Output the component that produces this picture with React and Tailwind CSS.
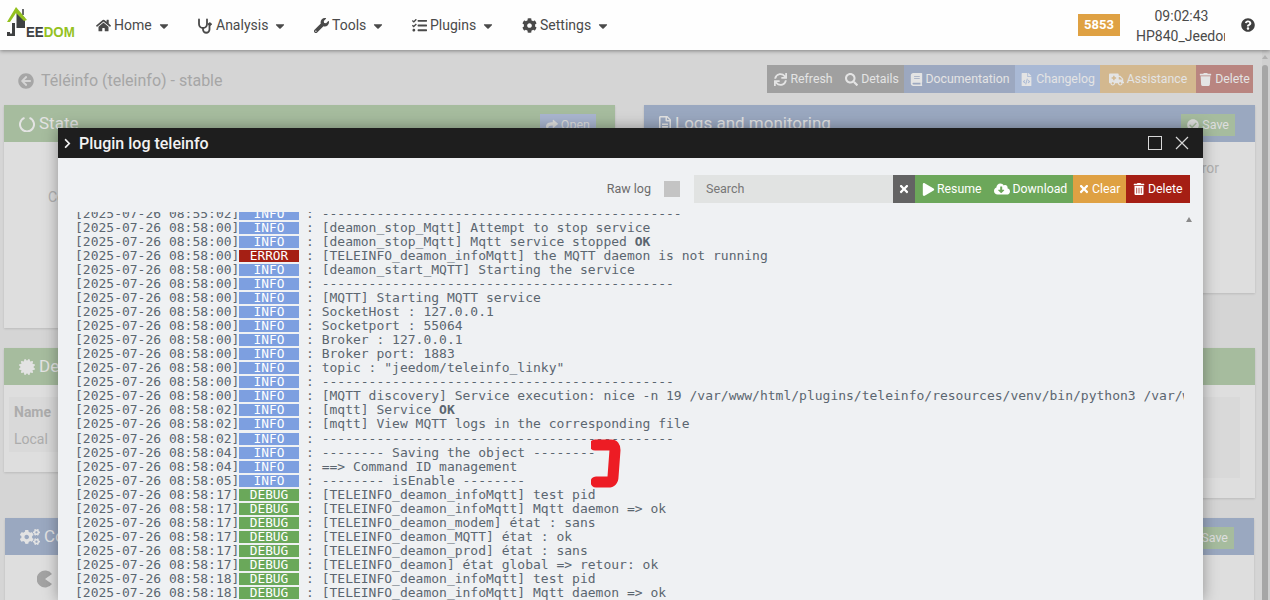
import React from 'react'
import {
  FaHome, FaWrench, FaTasks, FaCog, FaCogs, FaCaretDown, FaQuestionCircle, FaArrowCircleLeft,
  FaSync, FaSearch, FaBook, FaFileCode, FaAmbulance, FaTrash, FaTrashAlt, FaPlay, FaCloudDownloadAlt, FaTimes,
  FaRegFileAlt, FaCertificate, FaCheckCircle, FaShare, FaChevronRight,
} from 'react-icons/fa'

const dashes = (n) => '-'.repeat(n)

const LOG = [
  ['08:55:02', 'INFO', dashes(46)],
  ['08:58:00', 'INFO', '[deamon_stop_Mqtt] Attempt to stop service'],
  ['08:58:00', 'INFO', '[deamon_stop_Mqtt] Mqtt service stopped ', 'OK'],
  ['08:58:00', 'ERROR', '[TELEINFO_deamon_infoMqtt] the MQTT daemon is not running'],
  ['08:58:00', 'INFO', '[deamon_start_MQTT] Starting the service'],
  ['08:58:00', 'INFO', dashes(45)],
  ['08:58:00', 'INFO', '[MQTT] Starting MQTT service'],
  ['08:58:00', 'INFO', 'SocketHost : 127.0.0.1'],
  ['08:58:00', 'INFO', 'Socketport : 55064'],
  ['08:58:00', 'INFO', 'Broker : 127.0.0.1'],
  ['08:58:00', 'INFO', 'Broker port: 1883'],
  ['08:58:00', 'INFO', 'topic : "jeedom/teleinfo_linky"'],
  ['08:58:00', 'INFO', dashes(45)],
  ['08:58:00', 'INFO', '[MQTT discovery] Service execution: nice -n 19 /var/www/html/plugins/teleinfo/resources/venv/bin/python3 /var/www/html/plugins/teleinfo/resources/'],
  ['08:58:02', 'INFO', '[mqtt] Service ', 'OK'],
  ['08:58:02', 'INFO', '[mqtt] View MQTT logs in the corresponding file'],
  ['08:58:02', 'INFO', dashes(45)],
  ['08:58:04', 'INFO', '-------- Saving the object --------'],
  ['08:58:04', 'INFO', '==> Command ID management'],
  ['08:58:05', 'INFO', '-------- isEnable --------'],
  ['08:58:17', 'DEBUG', '[TELEINFO_deamon_infoMqtt] test pid'],
  ['08:58:17', 'DEBUG', '[TELEINFO_deamon_infoMqtt] Mqtt daemon => ok'],
  ['08:58:17', 'DEBUG', '[TELEINFO_deamon_modem] état : sans'],
  ['08:58:17', 'DEBUG', '[TELEINFO_deamon_MQTT] état : ok'],
  ['08:58:17', 'DEBUG', '[TELEINFO_deamon_prod] état : sans'],
  ['08:58:17', 'DEBUG', '[TELEINFO_deamon] état global => retour: ok'],
  ['08:58:18', 'DEBUG', '[TELEINFO_deamon_infoMqtt] test pid'],
  ['08:58:18', 'DEBUG', '[TELEINFO_deamon_infoMqtt] Mqtt daemon => ok'],
]

const levelColors = { INFO: 'bg-[#7d9fe0]', ERROR: 'bg-[#a51f14]', DEBUG: 'bg-[#6aa85a]' }

function Logo() {
  return (
    <div className="relative w-[80px] h-[50px] shrink-0">
      <svg className="absolute left-[5px] top-[5px]" width="24" height="33" viewBox="0 0 24 33">
        <path d="M11.5 8 L12 6 L20 13 V23 H11.5 Z" fill="#3f4142" />
        <rect x="17" y="4" width="2" height="6" fill="#6a6c6d" />
        <path d="M2 17 L11 2 L22 15 L19 16 L11 8 L5 17 Z" fill="#94c11f" />
        <path d="M7 18 H10 V31 H2 V27 H5 V28.5 H7 Z" fill="#3f4142" />
      </svg>
      <span className="absolute left-[26px] top-[25px] text-[14px] leading-[14px] font-bold font-['Liberation_Sans',sans-serif] whitespace-nowrap scale-x-95 origin-left">
        <span className="text-[#3f4142]">EE</span>
        <span className="text-[#94c11f]">DOM</span>
      </span>
    </div>
  )
}

function Stethoscope({ className }) {
  return (
    <svg className={className} width="16" height="16" viewBox="0 0 16 16" fill="none" stroke="currentColor" strokeWidth="1.8" strokeLinecap="round">
      <path d="M2 1.5 V6 A4 4 0 0 0 10 6 V1.5" />
      <path d="M6 10 V11.5 A3 3 0 0 0 12.5 11.5 V8" />
      <circle cx="12.8" cy="6.2" r="1.4" fill="currentColor" strokeWidth="1" />
    </svg>
  )
}

function ThinRing({ className }) {
  return (
    <svg className={className} width="16" height="16" viewBox="0 0 16 16" fill="none" stroke="currentColor" strokeWidth="2">
      <path d="M5.5 1.9 A7 7 0 1 0 10.5 1.9" />
    </svg>
  )
}

function NavItem({ icon: Icon, label, className }) {
  return (
    <div className={`flex items-center text-[14px] text-[#4a4a4a] shrink-0 ${className}`}>
      <Icon className="text-[15px] mr-[3px] shrink-0" />
      <span>{label}</span>
      <FaCaretDown className="text-[14px] ml-[5px]" />
    </div>
  )
}

function PageButton({ icon: Icon, label, className, iconClass = 'text-[13px]' }) {
  return (
    <div className={`flex items-center justify-center h-full gap-[3px] text-[12.3px] text-[#e4e4e4] ${className}`}>
      <Icon className={iconClass} />
      <span className="mt-[1px]">{label}</span>
    </div>
  )
}

function Panel({ title, icon: Icon, iconClass = 'text-[16px]', headerClass, heightClass, widthClass, button, buttonClass, buttonIcon: ButtonIcon, children }) {
  return (
    <section className={`bg-[#dedede] shadow-[0_1px_2px_rgba(0,0,0,0.12)] ${heightClass} ${widthClass}`}>
      <div className={`flex items-center justify-between h-[37px] pl-[15px] pr-[20px] ${headerClass}`}>
        <div className="flex items-center gap-[4px] mt-[1px] text-[17px] text-[#e3e3e3]">
          <Icon className={iconClass} />
          <span>{title}</span>
        </div>
        {button && (
          <div className={`flex items-center gap-[3px] h-[22px] mt-[3px] px-[6px] text-[12.5px] text-[#dedede] ${buttonClass}`}>
            <ButtonIcon className="text-[12px]" />
            {button}
          </div>
        )}
      </div>
      {children}
    </section>
  )
}

function Background() {
  return (
    <div className="flex-1 min-w-0 pl-[4px] pr-[7px]">
      <div className="flex items-start justify-between h-[55px] pl-[14px] pt-[15px]">
        <div className="flex items-center gap-[7px] h-[28px] mt-[2px] text-[16px] text-[#a6a6a6]">
          <FaArrowCircleLeft className="text-[16px]" />
          <span>Téléinfo (teleinfo) - stable</span>
        </div>
        <div className="flex h-[28px] mr-[2px]">
          <PageButton icon={FaSync} label="Refresh" className="w-[73px] bg-[#a0a0a0]" />
          <PageButton icon={FaSearch} label="Details" className="w-[64px] bg-[#a0a0a0]" />
          <PageButton icon={FaBook} label="Documentation" className="w-[111px] bg-[#9ca8c0]" />
          <PageButton icon={FaFileCode} label="Changelog" className="w-[85px] bg-[#a9b9d5]" />
          <PageButton icon={FaAmbulance} label="Assistance" iconClass="text-[15px]" className="w-[96px] bg-[#d3b88f]" />
          <PageButton icon={FaTrash} label="Delete" className="w-[57px] bg-[#b98580]" />
        </div>
      </div>

      <div className="flex justify-between items-start">
        <Panel title="State" icon={ThinRing} headerClass="bg-[#a6bc9e]" heightClass="h-[223px]" widthClass="w-[611px]"
          button="Open" buttonIcon={FaShare} buttonClass="bg-[#a9b5cf] mr-[-1px]">
          <p className="pl-[44px] pt-[45px] text-[14px] text-[#b0b0b0]">Configuration</p>
        </Panel>
        <Panel title="Logs and monitoring" icon={FaRegFileAlt} iconClass="w-[12px] h-[16px]" headerClass="bg-[#9aa8c0]" heightClass="h-[188px]" widthClass="w-[611px]"
          button="Save" buttonIcon={FaCheckCircle} buttonClass="bg-[#a6bc9e]">
          <p className="pr-[36px] pt-[16px] text-right text-[14px] text-[#b0b0b0]">error</p>
        </Panel>
      </div>

      <div className="flex justify-between items-start mt-[20px]">
        <Panel title="Dependencies" icon={FaCertificate} headerClass="bg-[#a6bc9e]" heightClass="h-[124px]" widthClass="w-[611px]">
          <div className="mx-[5px] mt-[12px] h-[55px] bg-[#d9d9d9] pl-[5px] pt-[5px] text-[14px] text-[#acacac]">
            <p className="font-bold">Name</p>
            <p className="mt-[6px]">Local</p>
          </div>
        </Panel>
        <Panel title="Daemon" icon={FaCertificate} headerClass="bg-[#a6bc9e]" heightClass="h-[150px]" widthClass="w-[611px]">
          <div className="mx-[15px] mt-[12px] h-[81px] bg-[#d9d9d9]" />
        </Panel>
      </div>

      <div className="mt-[20px] ml-[1px] mr-[1px]">
        <Panel title="Configuration" icon={FaCogs} iconClass="text-[20px]" headerClass="bg-[#9aa8c0]" heightClass="h-[90px]" widthClass="w-full"
          button="Save" buttonIcon={FaCheckCircle} buttonClass="bg-[#a6bc9e]">
          <div className="pl-[32px] pt-[15px]">
            <svg width="16" height="18" viewBox="0 0 16 18">
              <path d="M15 4 A8.5 8.5 0 1 0 15 14 L8 9 Z" fill="#a3a3a3" />
            </svg>
          </div>
        </Panel>
      </div>
    </div>
  )
}

function LogRow({ time, level, text, strong }) {
  return (
    <div className="flex items-center h-[14.04px] whitespace-pre text-[13px] leading-[14px] text-[#5b6670]">
      <span className="w-[164px] shrink-0">{`[2025-07-26 ${time}]`}</span>
      <span className={`w-[60px] h-[12px] shrink-0 flex items-center justify-center text-[12.8px] text-white ${levelColors[level]}`}>{level}</span>
      <span className="ml-[7px]">
        {': '}
        {text}
        {strong && <b>{strong}</b>}
      </span>
    </div>
  )
}

function ToolButton({ icon: Icon, label, iconClass, className }) {
  return (
    <div className={`flex items-center h-full text-[12.3px] text-white ${className}`}>
      <Icon className={iconClass} />
      <span className="mt-[1px]">{label}</span>
    </div>
  )
}

function LogModal() {
  return (
    <div className="absolute left-[58px] top-[128px] w-[1145px] h-[472px] flex flex-col bg-[#eff1f3] shadow-[0_0_14px_rgba(0,0,0,0.35)] overflow-hidden">
      <div className="flex items-center justify-between h-[30px] shrink-0 bg-[#1e1e1e] text-[#f2f2f2] pl-[4px] pr-[14px]">
        <div className="flex items-center gap-[6px] mt-[1px] text-[16px] font-medium">
          <FaChevronRight className="text-[11px]" />
          <span>Plugin log teleinfo</span>
        </div>
        <div className="flex items-center gap-[13px]">
          <div className="w-[14px] h-[14px] border-[1.5px] border-[#d8d8d8]" />
          <svg width="14" height="14" viewBox="0 0 14 14" stroke="#d8d8d8" strokeWidth="1.2">
            <path d="M1 1 L13 13 M13 1 L1 13" />
          </svg>
        </div>
      </div>

      <div className="flex items-center justify-end h-[28px] mt-[17px] pr-[13px] shrink-0">
        <span className="mt-[1px] mr-[13px] text-[12.5px] text-[#6b6b6b]">Raw log</span>
        <div className="w-[16px] h-[16px] bg-[#c4c4c4] mr-[14px]" />
        <div className="flex items-center w-[199px] h-full bg-[#e1e3e2] pl-[12px] pt-[1px] text-[12.5px] text-[#777]">Search</div>
        <div className="flex items-center justify-center w-[22px] h-full bg-[#636363] text-white">
          <FaTimes className="text-[12px]" />
        </div>
        <div className="flex items-center w-[158px] h-full bg-[#6ca75a]">
          <ToolButton icon={FaPlay} label="Resume" iconClass="text-[13px] mr-[2px]" className="pl-[7px] pr-[6px]" />
          <ToolButton icon={FaCloudDownloadAlt} label="Download" iconClass="text-[16px] mr-[3px]" className="pl-[6px]" />
        </div>
        <ToolButton icon={FaTimes} label="Clear" iconClass="text-[12px] mr-[2px]" className="w-[53px] bg-[#dfa143] pl-[5px]" />
        <ToolButton icon={FaTrashAlt} label="Delete" iconClass="text-[12px] mr-[3px]" className="w-[64px] bg-[#a51f14] pl-[7px]" />
      </div>

      <div className="relative flex-1 min-h-0 mt-[9px] ml-[17px] mr-[19px] overflow-hidden font-['DejaVu_Sans_Mono',monospace]">
        <div className="mt-[-5px]">
          {LOG.map(([time, level, text, strong], i) => (
            <LogRow key={i} time={time} level={level} text={text} strong={strong} />
          ))}
        </div>
      </div>

      <div className="absolute left-[1128px] top-[89px] w-0 h-0 border-x-[3.5px] border-x-transparent border-b-[5px] border-b-[#8a8a8a]" />

      <svg className="absolute left-[533px] top-[310px]" width="32" height="56" viewBox="0 0 32 56" fill="none">
        <path d="M4 7 H20 Q24 7 24 12 L22 39 Q22 44 17 44 H5" stroke="#ed1c24" strokeWidth="11" strokeLinecap="round" strokeLinejoin="round" />
      </svg>
    </div>
  )
}

export default function App() {
  return (
    <div className="relative h-[600px] overflow-hidden bg-[#d5d5d5] font-['Roboto',sans-serif]">
      <header className="relative z-10 flex items-center h-[50px] bg-[#fefefe] shadow-[0_1px_4px_rgba(0,0,0,0.4)]">
        <Logo />
        <div className="flex items-center ml-[16px] pt-[1px]">
          <NavItem icon={FaHome} label="Home" className="w-[101px]" />
          <NavItem icon={Stethoscope} label="Analysis" className="w-[117px]" />
          <NavItem icon={FaWrench} label="Tools" className="w-[98px]" />
          <NavItem icon={FaTasks} label="Plugins" className="w-[110px]" />
          <NavItem icon={FaCog} label="Settings" className="w-[100px]" />
        </div>
        <div className="ml-auto flex items-center">
          <div className="flex items-center justify-center w-[42px] h-[22px] bg-[#dfa143] text-white text-[13px] font-bold">5853</div>
          <div className="w-[89px] ml-[16px] pt-[1px] text-[14px] leading-[20px] text-[#4a4a4a] text-center overflow-hidden whitespace-nowrap">
            <div className="pl-[2px]">09:02:43</div>
            <div className="text-left">HP840_Jeedom</div>
          </div>
          <FaQuestionCircle className="ml-[16px] mr-[15px] text-[14px] text-[#3f3f3f]" />
        </div>
      </header>

      <div className="flex">
        <Background />
        <div className="relative w-[8px] h-[550px] shrink-0 bg-[#cfcfcf]">
          <div className="absolute left-0 top-[15px] w-[6px] h-[535px] rounded-t-[3px] bg-[#a6a6a6]" />
          <div className="absolute left-[0px] top-[5px] w-0 h-0 border-x-[3px] border-x-transparent border-b-[4px] border-b-[#b0b0b0]" />
        </div>
      </div>

      <LogModal />
    </div>
  )
}
